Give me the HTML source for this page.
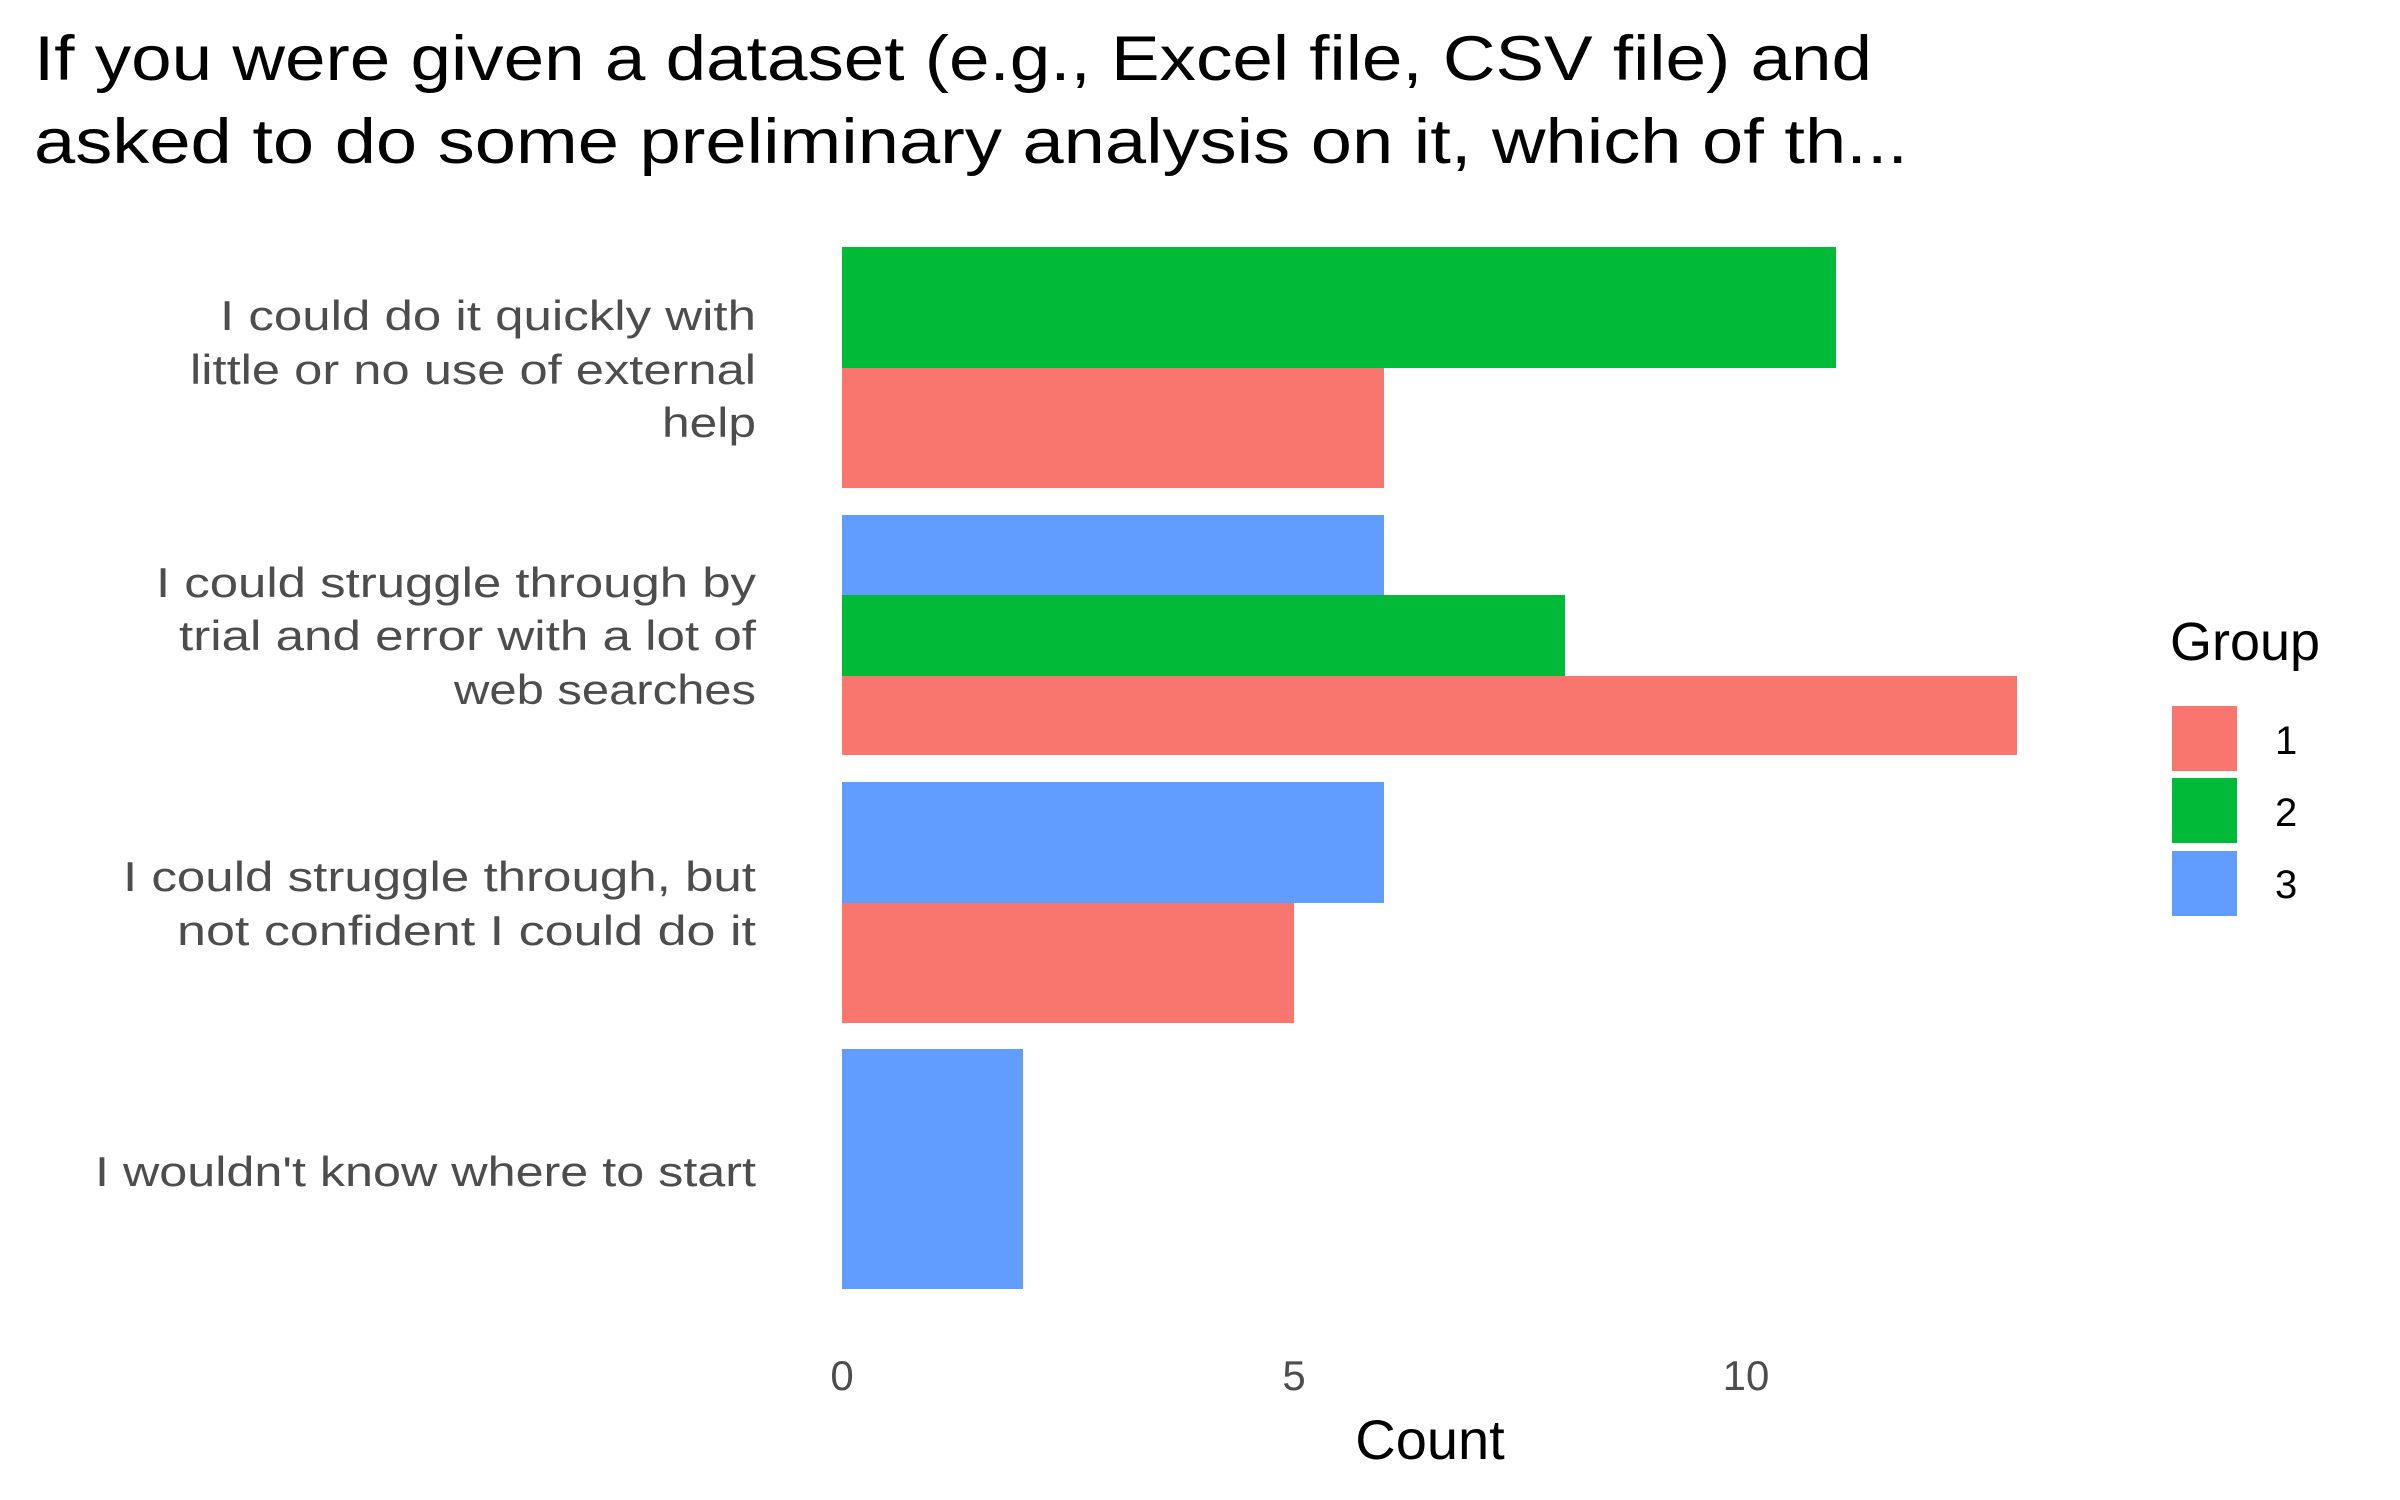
<!DOCTYPE html>
<html><head><meta charset="utf-8"><style>
html,body{margin:0;padding:0;background:#fff;}
svg{display:block;}
text{font-family:"Liberation Sans","DejaVu Sans",sans-serif;}
</style></head><body>
<svg width="2400" height="1500" viewBox="0 0 2400 1500" xmlns="http://www.w3.org/2000/svg">
<rect width="2400" height="1500" fill="#fff"/>
<g fill="#000" font-size="63">
<text x="34" y="80" textLength="1838" lengthAdjust="spacingAndGlyphs">If you were given a dataset (e.g., Excel file, CSV file) and</text>
<text x="34" y="163" textLength="1874" lengthAdjust="spacingAndGlyphs">asked to do some preliminary analysis on it, which of th...</text>
</g>
<g fill="#4d4d4d" font-size="42">
<text x="220" y="330" textLength="536" lengthAdjust="spacingAndGlyphs">I could do it quickly with</text>
<text x="190" y="384" textLength="566" lengthAdjust="spacingAndGlyphs">little or no use of external</text>
<text x="662" y="437" textLength="94" lengthAdjust="spacingAndGlyphs">help</text>
<text x="156" y="597" textLength="600" lengthAdjust="spacingAndGlyphs">I could struggle through by</text>
<text x="179" y="650" textLength="577" lengthAdjust="spacingAndGlyphs">trial and error with a lot of</text>
<text x="454" y="704" textLength="302" lengthAdjust="spacingAndGlyphs">web searches</text>
<text x="123" y="891" textLength="633" lengthAdjust="spacingAndGlyphs">I could struggle through, but</text>
<text x="177" y="945" textLength="579" lengthAdjust="spacingAndGlyphs">not confident I could do it</text>
<text x="95" y="1186" textLength="661" lengthAdjust="spacingAndGlyphs">I wouldn't know where to start</text>
</g>
<rect x="842" y="247" width="994" height="121" fill="#00BA38"/>
<rect x="842" y="368" width="542" height="120" fill="#F8766D"/>
<rect x="842" y="515" width="542" height="80" fill="#619CFF"/>
<rect x="842" y="595" width="723" height="81" fill="#00BA38"/>
<rect x="842" y="676" width="1175" height="79" fill="#F8766D"/>
<rect x="842" y="782" width="542" height="121" fill="#619CFF"/>
<rect x="842" y="903" width="452" height="120" fill="#F8766D"/>
<rect x="842" y="1049" width="181" height="240" fill="#619CFF"/>
<g fill="#4d4d4d" font-size="42" text-anchor="middle">
<text x="842" y="1390">0</text>
<text x="1294" y="1390">5</text>
<text x="1746" y="1390">10</text>
</g>
<text x="1430" y="1459" font-size="56" text-anchor="middle" fill="#000">Count</text>
<text x="2170" y="660" font-size="54" fill="#000">Group</text>
<rect x="2172" y="706" width="65" height="65" fill="#F8766D"/>
<rect x="2172" y="778" width="65" height="65" fill="#00BA38"/>
<rect x="2172" y="851" width="65" height="65" fill="#619CFF"/>
<g font-size="40" fill="#000">
<text x="2275" y="754">1</text>
<text x="2275" y="826">2</text>
<text x="2275" y="898">3</text>
</g>
</svg>
</body></html>
